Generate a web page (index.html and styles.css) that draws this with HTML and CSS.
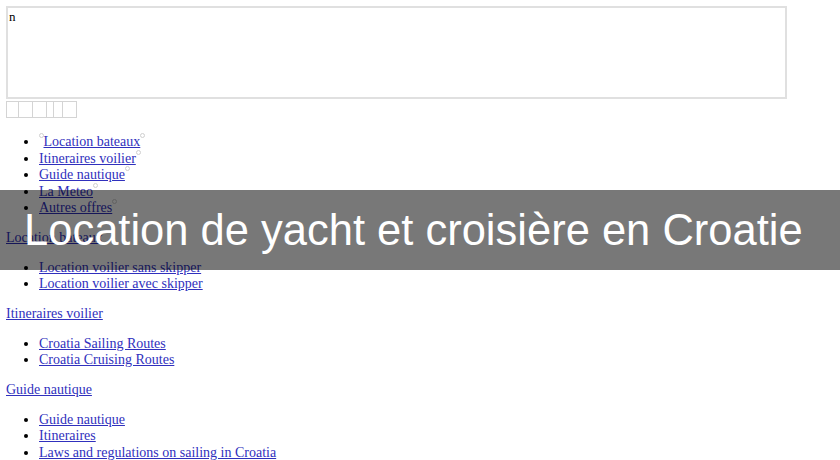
FILE: index.html
```html
<!DOCTYPE html>
<html lang="fr">
<head>
    <meta charset="UTF-8">
    <title>Location de yacht et croisière en Croatie</title>
    <link rel="stylesheet" href="styles.css">
</head>
<body>
    <div class="frame">n</div>

    <div class="tabs">
        <span class="tab w12"></span><span class="tab w14"></span><span class="tab w14"></span><span class="tab w7"></span><span class="tab w9"></span><span class="tab w14"></span>
    </div>

    <ul class="menu">
        <li><span class="dot"></span> <a href="#">Location bateaux</a></li>
        <li><a href="#">Itineraires voilier</a></li>
        <li><a href="#">Guide nautique</a></li>
        <li><a href="#">La Meteo</a></li>
        <li><a href="#">Autres offres</a></li>
    </ul>

    <p><a href="#">Location bateaux</a></p>
    <ul>
        <li><a href="#">Location voilier sans skipper</a></li>
        <li><a href="#">Location voilier avec skipper</a></li>
    </ul>

    <p><a href="#">Itineraires voilier</a></p>
    <ul>
        <li><a href="#">Croatia Sailing Routes</a></li>
        <li><a href="#">Croatia Cruising Routes</a></li>
    </ul>

    <p><a href="#">Guide nautique</a></p>
    <ul>
        <li><a href="#">Guide nautique</a></li>
        <li><a href="#">Itineraires</a></li>
        <li><a href="#">Laws and regulations on sailing in Croatia</a></li>
    </ul>

    <!-- title banner laid over the page -->
    <div class="banner">Location de yacht et croisière en Croatie</div>
</body>
</html>
```

FILE: styles.css
```css
body {
    font-family: 'Liberation Serif', serif;
    font-size: 14px;
    line-height: 16.5px;
    margin: 6px;
    color: #000;
    background: #fff;
}

a {
    color: #3030bd;
}

.frame {
    width: 776px;
    height: 88px;
    border: 2px solid #e0e0e0;
    padding: 1px 0 0 1px;
    font-size: 13px;
    line-height: 16px;
}

.tabs {
    display: flex;
    margin-top: 2px;
    height: 18px;
}

.tab {
    height: 15px;
    border: 1px solid #d4d4d4;
    margin-right: -1px;
}

.w12 { width: 11px; }
.w14 { width: 13px; }
.w7 { width: 6px; }
.w9 { width: 8px; }

p {
    margin: 13.3px 0;
}

ul {
    margin: 13.3px 0;
    padding-left: 33px;
}

.menu {
    margin-top: 15px;
}

.menu a::after,
.dot {
    content: "";
    display: inline-block;
    width: 3px;
    height: 3px;
    border: 1px solid #cfcfcf;
    border-radius: 50%;
    vertical-align: top;
    margin-top: -1px;
    margin-right: -5px;
}

.dot {
    margin-right: -4px;
}

/* Overlay title */
.banner {
    position: absolute;
    top: 190px;
    left: 0;
    right: 0;
    height: 80px;
    padding-left: 24px;
    background: rgba(0, 0, 0, 0.53);
    color: #fff;
    font-family: 'Liberation Sans', Arial, sans-serif;
    font-size: 43.5px;
    line-height: 80px;
}
```
